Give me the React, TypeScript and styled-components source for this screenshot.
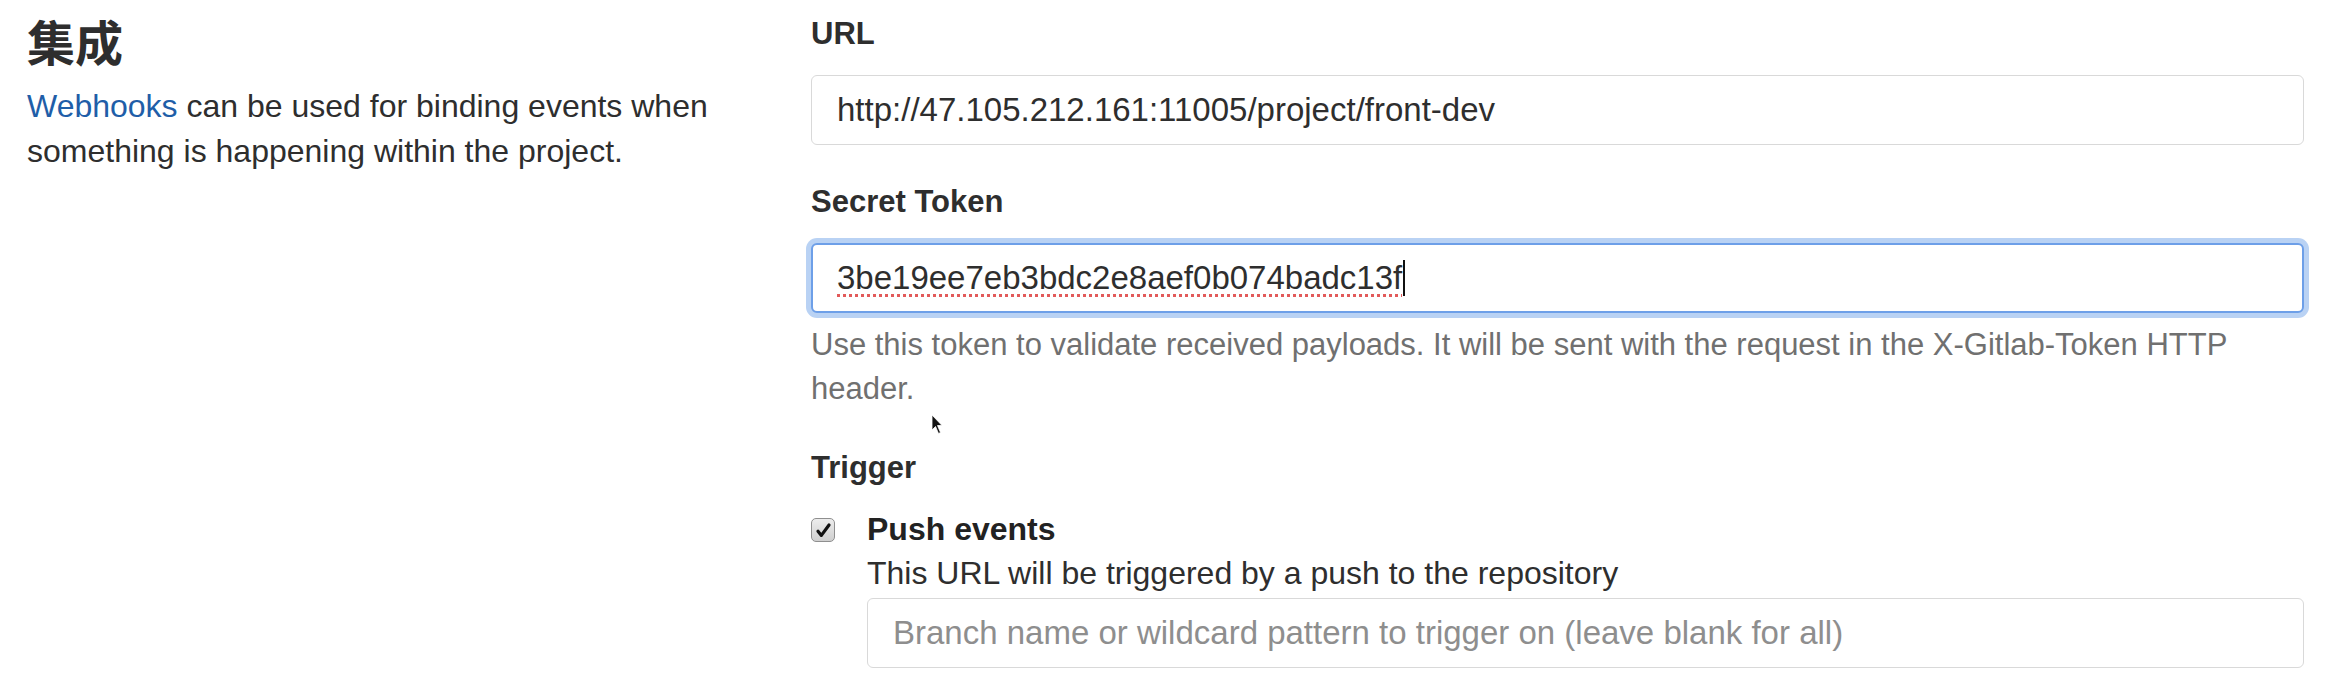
import React from "react";
import styled, { createGlobalStyle } from "styled-components";

const GlobalStyle = createGlobalStyle`
  html, body {
    margin: 0;
    padding: 0;
    background: #ffffff;
  }
  body {
    font-family: "Liberation Sans", Arial, "Noto Sans CJK SC", sans-serif;
    color: #2e2e2e;
  }
  * { box-sizing: border-box; }
`;

const Page = styled.div`
  position: relative;
  display: grid;
  grid-template-columns: 784px 1493px;
  padding: 0 39px 0 27px;
  width: 2343px;
  height: 689px;
  overflow: hidden;
`;

const Intro = styled.div`
  display: flex;
  flex-direction: column;
`;

const Title = styled.h4`
  margin: 6px 0 0 0;
  font-family: "Noto Sans CJK SC", "Liberation Sans", sans-serif;
  font-size: 48px;
  font-weight: 700;
  line-height: 68px;
  color: #2e2e2e;
`;

const Lead = styled.p`
  margin: 10px 0 0 0;
  font-size: 32px;
  line-height: 45px;
  width: 700px;
  color: #2e2e2e;
`;

const Link = styled.a`
  color: #1f5ea8;
  text-decoration: none;
`;

const Form = styled.div`
  display: flex;
  flex-direction: column;
  padding-top: 12px;
`;

const FormGroup = styled.div`
  display: flex;
  flex-direction: column;
  margin-bottom: 35px;
`;

const Label = styled.label`
  display: block;
  font-size: 31px;
  font-weight: 700;
  line-height: 44px;
  color: #2e2e2e;
  margin-bottom: 19px;
`;

const TextInput = styled.input`
  display: block;
  width: 100%;
  height: 70px;
  padding: 0 25px;
  border: 1.5px solid #d9d9d9;
  border-radius: 6px;
  background: #ffffff;
  font-family: "Liberation Sans", Arial, sans-serif;
  font-size: 33px;
  color: #2e2e2e;
  outline: none;
  &::placeholder {
    color: #8e8e8e;
  }
`;

const FocusedField = styled.div`
  display: flex;
  align-items: center;
  width: 100%;
  height: 70px;
  padding: 0 24px;
  border: 2px solid #6d9fe8;
  border-radius: 6px;
  background: #ffffff;
  box-shadow: 0 0 0 5px #b9d2f4;
  font-size: 33px;
  color: #2e2e2e;
`;

const TokenText = styled.span`
  white-space: nowrap;
  text-decoration: underline dotted #e25a5a;
  text-decoration-thickness: 3px;
  text-underline-offset: 5px;
`;

const Caret = styled.span`
  display: inline-block;
  width: 2px;
  height: 36px;
  background: #111111;
  margin-left: 1px;
`;

const HelpText = styled.p`
  margin: 10px 0 0 0;
  font-size: 31px;
  line-height: 44px;
  color: #707070;
`;

const CheckRow = styled.div`
  display: flex;
  align-items: flex-start;
  margin-top: -2px;
`;

const CheckBox = styled.span`
  flex: none;
  display: flex;
  align-items: center;
  justify-content: center;
  width: 24px;
  height: 24px;
  margin-top: 11px;
  margin-right: 32px;
  border: 1.5px solid #8f8f8f;
  border-radius: 5px;
  background: linear-gradient(#ededed, #cfcfcf);
`;

const CheckContent = styled.div`
  flex: 1;
  display: flex;
  flex-direction: column;
`;

const CheckTitle = styled.span`
  font-size: 32px;
  font-weight: 700;
  line-height: 44px;
  color: #222222;
`;

const CheckDesc = styled.span`
  font-size: 32px;
  line-height: 44px;
  color: #2e2e2e;
  margin-bottom: 3px;
`;

const Pointer = styled.svg`
  position: absolute;
  left: 931px;
  top: 414px;
  filter: blur(0.4px);
`;

export default function App() {
  return (
    <>
      <GlobalStyle />
      <Page>
        <Intro>
          <Title>集成</Title>
          <Lead>
            <Link href="#">Webhooks</Link> can be used for binding events when
            something is happening within the project.
          </Lead>
        </Intro>
        <Form>
          <FormGroup>
            <Label>URL</Label>
            <TextInput
              readOnly
              defaultValue="http://47.105.212.161:11005/project/front-dev"
            />
          </FormGroup>
          <FormGroup>
            <Label>Secret Token</Label>
            <FocusedField>
              <TokenText>3be19ee7eb3bdc2e8aef0b074badc13f</TokenText>
              <Caret />
            </FocusedField>
            <HelpText>
              Use this token to validate received payloads. It will be sent
              with the request in the X-Gitlab-Token HTTP header.
            </HelpText>
          </FormGroup>
          <Label>Trigger</Label>
          <CheckRow>
            <CheckBox>
              <svg width="17" height="17" viewBox="0 0 16 16">
                <path
                  d="M2.8 8.6 L6 12.6 L13.2 2.8"
                  fill="none"
                  stroke="#111"
                  strokeWidth="3"
                  strokeLinecap="round"
                  strokeLinejoin="round"
                />
              </svg>
            </CheckBox>
            <CheckContent>
              <CheckTitle>Push events</CheckTitle>
              <CheckDesc>
                This URL will be triggered by a push to the repository
              </CheckDesc>
              <TextInput
                readOnly
                placeholder="Branch name or wildcard pattern to trigger on (leave blank for all)"
              />
            </CheckContent>
          </CheckRow>
        </Form>
        <Pointer width="13" height="21" viewBox="0 0 13 21">
          <path
            d="M1 1 L1 16 L4.5 12.5 L7.5 19.5 L9.5 18.5 L6.5 11.5 L11 11.5 Z"
            fill="#111"
            stroke="#fff"
            strokeWidth="0.8"
          />
        </Pointer>
      </Page>
    </>
  );
}
